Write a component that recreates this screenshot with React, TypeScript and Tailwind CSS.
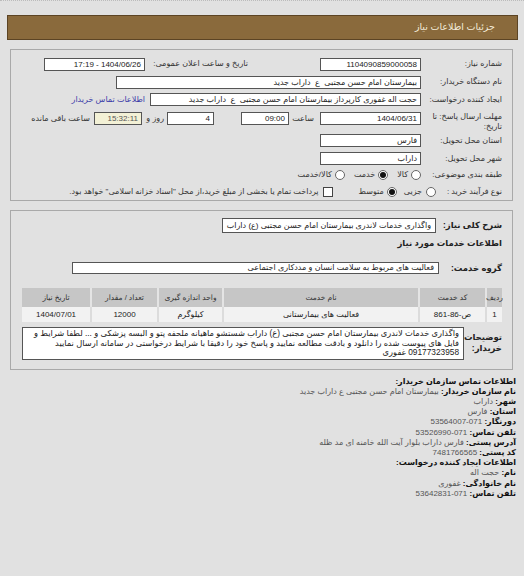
import React from "react";

const font = "font-['Liberation_Sans','DejaVu_Sans',sans-serif]";

function Field({ w, children, className = "" }: { w: string; children?: React.ReactNode; className?: string }) {
  return (
    <div className={`${w} h-[13px] shrink-0 border border-[#555] bg-white px-[3px] text-right text-[8px] leading-[11px] text-[#222] whitespace-nowrap overflow-hidden ${className}`}>
      {children}
    </div>
  );
}

function Radio({ on }: { on?: boolean }) {
  return (
    <span className="inline-flex h-[10px] w-[10px] items-center justify-center rounded-full border border-[#666] bg-white">
      {on && <span className="h-[6px] w-[6px] rounded-full bg-[#111]" />}
    </span>
  );
}

function Label({ children, className = "" }: { children: React.ReactNode; className?: string }) {
  return <div className={`w-[81px] shrink-0 text-[8px] leading-[10px] text-[#333] whitespace-nowrap ${className}`}>{children}</div>;
}

const cols = [
  { t: "ردیف", w: "w-[17px]", v: "1" },
  { t: "کد خدمت", w: "w-[67px]", v: "ص-86-861" },
  { t: "نام خدمت", w: "w-[196px]", v: "فعالیت های بیمارستانی" },
  { t: "واحد اندازه گیری", w: "w-[65px]", v: "کیلوگرم" },
  { t: "تعداد / مقدار", w: "w-[67px]", v: "12000" },
  { t: "تاریخ نیاز", w: "w-[68px]", v: "1404/07/01" },
];

const contact: [string, string][] = [
  ["نام سازمان خریدار:", "بیمارستان امام حسن مجتبی ع داراب جدید"],
  ["شهر:", "داراب"],
  ["استان:", "فارس"],
  ["دورنگار:", "071-53564007"],
  ["تلفن تماس:", "071-53526990"],
  ["آدرس پستی:", "فارس داراب بلوار آیت الله خامنه ای مد ظله"],
  ["کد پستی:", "7481766565"],
];

export default function App() {
  return (
    <div dir="rtl" className={`${font} min-h-[576px] w-[524px] bg-[#e1e1e1] text-[#222] border-t border-dotted border-[#bbb] pt-[14px]`}>
      {/* title bar */}
      <div className="mr-[6px] ml-[7px] h-[25px] border border-[#5c4424] bg-[#8a6a3c] flex items-center pr-[22px] text-[9.5px] text-[#f3ead8]">
        جزئیات اطلاعات نیاز
      </div>

      {/* main info box */}
      <div className="ml-[10px] mr-[11px] mt-[9px] border border-[#a9a9a9] pt-[5px] pr-[10px]">
        <div className="flex h-[18px] items-center">
          <Label>شماره نیاز:</Label>
          <Field w="w-[101px]" className="text-center">1104090859000058</Field>
          <div className="mr-[72px] w-[103px] shrink-0 whitespace-nowrap text-[8px] text-[#333]">تاریخ و ساعت اعلان عمومی:</div>
          <Field w="w-[101px]" className="text-center">1404/06/26 - 17:19</Field>
        </div>
        <div className="flex h-[18px] items-center">
          <Label>نام دستگاه خریدار:</Label>
          <Field w="w-[305px]">بیمارستان امام حسن مجتبی&nbsp; ع&nbsp; داراب جدید</Field>
        </div>
        <div className="flex h-[17px] items-center">
          <Label>ایجاد کننده درخواست:</Label>
          <Field w="w-[271px]">حجت اله غفوری کارپرداز بیمارستان امام حسن مجتبی&nbsp; ع&nbsp; داراب جدید</Field>
          <div className="mr-[5px] whitespace-nowrap text-[8px] text-[#3a3aa8]">اطلاعات تماس خریدار</div>
        </div>
        <div className="flex h-[22px] items-start pt-[4px]">
          <Label>
            مهلت ارسال پاسخ: تا
            <br />
            تاریخ:
          </Label>
          <Field w="w-[101px]" className="text-center">1404/06/31</Field>
          <div className="mr-[6px] w-[25px] shrink-0 text-[8px] leading-[13px] text-[#333]">ساعت</div>
          <Field w="w-[48px]" className="text-center">09:00</Field>
          <div className="w-[27px] shrink-0" />
          <Field w="w-[47px]" className="text-center">4</Field>
          <div className="mr-[3px] w-[22px] shrink-0 text-[8px] leading-[13px] text-[#333]">روز و</div>
          <Field w="w-[48px]" className="text-center !bg-[#f3f1d6] text-[#555]">15:32:11</Field>
          <div className="mr-[4px] whitespace-nowrap text-[8px] leading-[13px] text-[#333]">ساعت باقی مانده</div>
        </div>
        <div className="flex h-[21px] items-center">
          <Label>استان محل تحویل:</Label>
          <Field w="w-[101px]">فارس</Field>
        </div>
        <div className="flex h-[15px] items-center">
          <Label>شهر محل تحویل:</Label>
          <Field w="w-[101px]">داراب</Field>
        </div>
        <div className="flex h-[18px] items-center text-[8px] text-[#333]">
          <Label>طبقه بندی موضوعی:</Label>
          <Radio />
          <span className="mr-[3px]">کالا</span>
          <span className="mr-[9px] flex"><Radio on /></span>
          <span className="mr-[3px]">خدمت</span>
          <span className="mr-[9px] flex"><Radio /></span>
          <span className="mr-[3px]">کالا/خدمت</span>
        </div>
        <div className="flex h-[16px] items-center text-[8px] text-[#333] whitespace-nowrap">
          <div className="w-[66px] shrink-0">نوع فرآیند خرید :</div>
          <Radio />
          <span className="mr-[4px]">جزیی</span>
          <span className="mr-[7px] flex"><Radio on /></span>
          <span className="mr-[3px]">متوسط</span>
          <span className="mr-[26px] inline-block h-[10px] w-[10px] border border-[#444] bg-white" />
          <span className="mr-[4px]">پرداخت تمام یا بخشی از مبلغ خرید،از محل "اسناد خزانه اسلامی" خواهد بود.</span>
        </div>
      </div>

      {/* description box */}
      <div className="ml-[10px] mr-[11px] mt-[9px] border border-[#a9a9a9] pt-[7px] pr-[10px] pl-[11px] pb-[9px]">
        <div className="flex h-[15px] items-center">
          <div className="w-[66px] shrink-0 whitespace-nowrap text-[8.5px] font-bold text-[#222]">شرح کلی نیاز:</div>
          <div className="h-[15px] w-[214px] border border-[#555] bg-white px-[4px] flex items-center text-[8px] whitespace-nowrap">
            واگذاری خدمات لاندری بیمارستان امام حسن مجتبی (ع) داراب
          </div>
        </div>
        <div className="flex h-[20px] items-center text-[8.5px] font-bold text-[#222]">اطلاعات خدمات مورد نیاز</div>
        <div className="mt-[8px] flex h-[14px] items-center">
          <div className="w-[63px] shrink-0 whitespace-nowrap text-[8.5px] font-bold text-[#222]">گروه خدمت:</div>
          <div className="h-[12px] w-[367px] border border-[#555] bg-white px-[4px] flex items-center text-[8px] whitespace-nowrap">
            فعالیت های مربوط به سلامت انسان و مددکاری اجتماعی
          </div>
        </div>

        <div className="mt-[13px] ml-[2px] w-[480px]">
          <div className="flex h-[19px] bg-[#c6c6c6]">
            {cols.map((c) => (
              <div key={c.t} className={`${c.w} flex items-center justify-center border-l-2 border-[#e4e4e4] text-[7.5px] text-[#333] whitespace-nowrap last:border-l-0`}>
                {c.t}
              </div>
            ))}
          </div>
          <div className="flex h-[15px] bg-[#f2f2f2]">
            {cols.map((c) => (
              <div key={c.t} className={`${c.w} flex items-center justify-center border-l-2 border-[#dcdcdc] text-[8px] text-[#222] whitespace-nowrap last:border-l-0`}>
                {c.v}
              </div>
            ))}
          </div>
        </div>

        <div className="mt-[5px] flex items-center">
          <div className="w-[38px] shrink-0 text-[8.5px] font-bold leading-[11px] text-[#222]">
            توضیحات
            <br />
            خریدار:
          </div>
          <div className="w-[447px] border border-[#555] bg-white px-[4px] py-[1px] text-[8.3px] leading-[9.5px] text-[#222] whitespace-nowrap overflow-hidden">
            واگذاری خدمات لاندری بیمارستان امام حسن مجتبی (ع) داراب شستشو ماهیانه ملحفه پتو و البسه پزشکی و ... لطفا شرایط و
            <br />
            فایل های پیوست شده را دانلود و بادقت مطالعه نمایید و پاسخ خود را دقیقا با شرایط درخواستی در سامانه ارسال نمایید
            <br />
            09177323958 غفوری
          </div>
        </div>
      </div>

      {/* contact info */}
      <div className="mt-[7px] pr-[8px] text-[8px] leading-[10.2px] whitespace-nowrap">
        <div className="font-bold text-[#111]">اطلاعات تماس سازمان خریدار:</div>
        {contact.map(([k, v]) => (
          <div key={k}>
            <span className="font-bold text-[#111]">{k}</span> <span className="text-[#555]">{v}</span>
          </div>
        ))}
        <div className="font-bold text-[#111]">اطلاعات ایجاد کننده درخواست:</div>
        <div><span className="font-bold text-[#111]">نام:</span> <span className="text-[#555]">حجت اله</span></div>
        <div><span className="font-bold text-[#111]">نام خانوادگی:</span> <span className="text-[#555]">غفوری</span></div>
        <div><span className="font-bold text-[#111]">تلفن تماس:</span> <span className="text-[#555]">071-53642831</span></div>
      </div>
    </div>
  );
}
